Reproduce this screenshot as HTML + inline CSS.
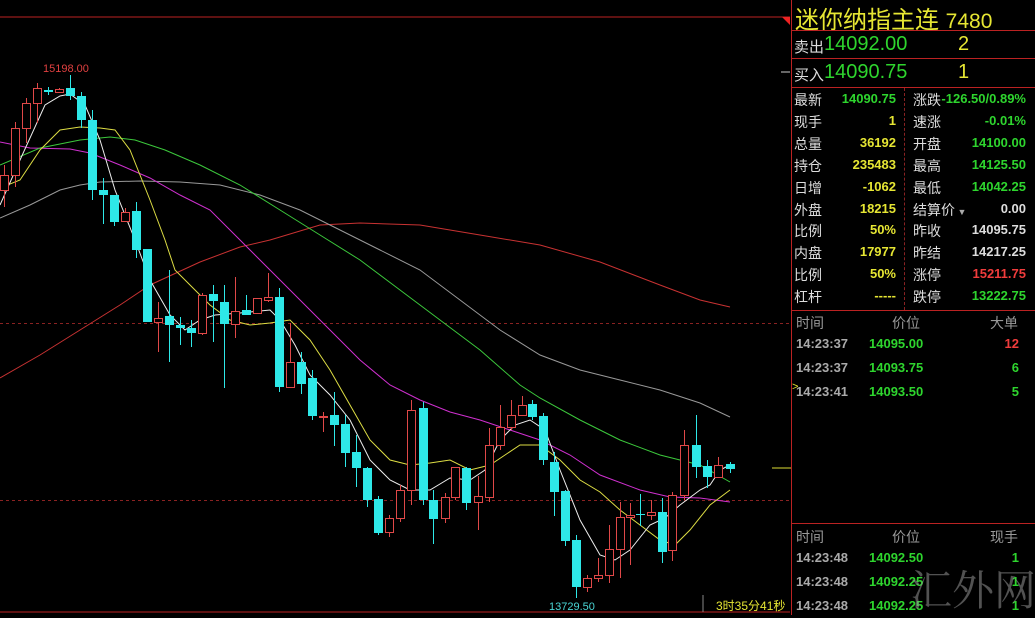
<!DOCTYPE html>
<html><head><meta charset="utf-8"><style>
html,body{margin:0;padding:0;background:#000;width:1035px;height:615px;overflow:hidden;font-family:"Liberation Sans","Noto Sans CJK SC",sans-serif}
#p{position:absolute;left:791px;top:0;width:244px;height:615px;border-left:1px solid #b22;}
.t{position:absolute;white-space:nowrap}
.g{color:#2ed52e;font-weight:bold}
.y{color:#e6e633;font-weight:bold}
.w{color:#ddd;font-weight:bold}
.r{color:#f03c3c;font-weight:bold}
.l{color:#ddd}
.hl{position:absolute;left:0;width:244px;height:1px;background:#b22}
</style></head><body>
<svg width="791" height="615" style="position:absolute;left:0;top:0" id="c">
<line x1="0" y1="17" x2="790" y2="17" stroke="#b22" stroke-width="1"/>
<polygon points="782,17 790,17 790,25" fill="#e22"/>
<line x1="0" y1="323.5" x2="790" y2="323.5" stroke="#8a2222" stroke-dasharray="3,3"/>
<line x1="0" y1="500.5" x2="790" y2="500.5" stroke="#8a2222" stroke-dasharray="3,3"/>
<line x1="0" y1="612" x2="790" y2="612" stroke="#b22"/>
<line x1="781" y1="72" x2="790" y2="72" stroke="#ccc"/>
<line x1="772" y1="468" x2="791" y2="468" stroke="#dd3"/>
<g id="ma" fill="none" stroke-width="1"></g>
<g id="k"></g>
<text x="43" y="72" fill="#e04040" font-size="11" font-family="Liberation Sans">15198.00</text>
<text x="549" y="610" fill="#4ad6d6" font-size="11" font-family="Liberation Sans">13729.50</text>
<line x1="703" y1="595" x2="703" y2="612" stroke="#888"/>
<text x="716" y="610" fill="#e6e633" font-size="12" font-family="Liberation Sans,Noto Sans CJK SC,sans-serif">3时35分41秒</text>
</svg>
<div id="p">
<div class="t" style="left:3px;top:0px;font-size:24px;color:#e6e633">迷你纳指主连 <span style="font-size:21px">7480</span></div>
<div class="hl" style="top:30px"></div>
<div class="t l" style="left:2px;top:36px;font-size:15px">卖出</div>
<div class="t" style="left:32px;top:33px;font-size:20px;color:#2ed52e">14092.00</div>
<div class="t" style="left:166px;top:33px;font-size:20px;color:#e6e633">2</div>
<div class="hl" style="top:58px"></div>
<div class="t l" style="left:2px;top:64px;font-size:15px">买入</div>
<div class="t" style="left:32px;top:61px;font-size:20px;color:#2ed52e">14090.75</div>
<div class="t" style="left:166px;top:61px;font-size:20px;color:#e6e633">1</div>
<div class="hl" style="top:87px"></div>
<div style="position:absolute;left:112px;top:88px;height:222px;border-left:1px dashed #8a2222"></div>
<div id="st"></div>
<div class="hl" style="top:310px"></div>
<div class="hl" style="top:523px"></div>
<div id="tk"></div>
<div class="t" style="left:118px;top:558px;font-size:42px;color:rgba(150,150,150,0.55);font-family:'Noto Serif CJK SC',serif">汇外网</div>
</div>
<script>
var L=[["最新","14090.75","g","涨跌","-126.50/0.89%","g"],["现手","1","y","速涨","-0.01%","g"],["总量","36192","y","开盘","14100.00","g"],["持仓","235483","y","最高","14125.50","g"],["日增","-1062","y","最低","14042.25","g"],["外盘","18215","y","结算价","0.00","w"],["比例","50%","y","昨收","14095.75","w"],["内盘","17977","y","昨结","14217.25","w"],["比例","50%","y","涨停","15211.75","r"],["杠杆","-----","y","跌停","13222.75","g"]];
var h="";L.forEach(function(r,i){var y=90+i*21.9;
h+='<div class="t l" style="left:2px;top:'+y+'px;font-size:14px">'+r[0]+'</div>';
h+='<div class="t '+r[2]+'" style="right:140px;top:'+(y+1)+'px;font-size:13px">'+r[1]+'</div>';
h+='<div class="t l" style="left:121px;top:'+y+'px;font-size:14px">'+r[3]+(i==5?'<span style="font-size:9px;color:#aaa"> ▼</span>':'')+'</div>';
h+='<div class="t '+r[5]+'" style="right:10px;top:'+(y+1)+'px;font-size:13px">'+r[4]+'</div>';});
document.getElementById("st").innerHTML=h;
function tk(top,hd,rows){var s='<div class="t" style="left:4px;top:'+top+'px;font-size:14px;color:#999">时间</div><div class="t" style="left:100px;top:'+top+'px;font-size:14px;color:#999">价位</div><div class="t" style="right:18px;top:'+top+'px;font-size:14px;color:#999">'+hd+'</div>';
rows.forEach(function(r,i){var y=top+23+i*24;s+='<div class="t" style="left:4px;top:'+y+'px;font-size:13px;color:#aaa;font-weight:bold">'+r[0]+'</div><div class="t g" style="left:77px;top:'+y+'px;font-size:13px">'+r[1]+'</div><div class="t '+r[3]+'" style="right:17px;top:'+y+'px;font-size:13px">'+r[2]+'</div>';});return s;}
document.getElementById("tk").innerHTML=tk(313,"大单",[["14:23:37","14095.00","12","r"],["14:23:37","14093.75","6","g"],["14:23:41","14093.50","5","g"]])+tk(527,"现手",[["14:23:48","14092.50","1","g"],["14:23:48","14092.25","1","g"],["14:23:48","14092.25","1","g"]])+'<div class="t" style="left:0px;top:381px;font-size:11px;color:#e6e633">&gt;</div>';
var K=[[4,'r',175,190,165,207],[15,'r',128,175,122,187],[26,'r',103,128,98,143],[37,'r',88,103,83,123],[48,'c',90,92,87,95],[59,'r',89,92,88,93],[70,'c',88,96,75,100],[81,'c',96,120,92,128],[92,'c',120,190,110,200],[103,'c',190,195,178,224],[114,'c',195,222,195,226],[125,'r',212,221,208,222],[136,'c',211,250,202,258],[147,'c',249,322,249,322],[158,'r',318,322,302,352],[169,'c',316,325,270,362],[180,'c',325,328,317,345],[191,'c',328,333,320,347],[202,'r',295,333,293,335],[213,'c',294,301,285,342],[224,'c',302,324,285,388],[235,'r',311,324,277,338],[246,'c',310,315,295,315],[257,'r',298,313,298,313],[268,'r',297,300,273,302],[279,'c',297,387,288,392],[290,'r',362,387,323,388],[301,'c',362,384,352,394],[312,'c',378,416,370,420],[323,'r',416,417,412,432],[334,'c',415,425,392,446],[345,'c',424,453,415,467],[356,'c',452,468,435,487],[367,'c',468,500,467,507],[378,'c',499,533,496,535],[389,'r',518,532,515,537],[400,'r',490,518,485,522],[411,'r',410,490,400,505],[423,'c',408,500,402,505],[433,'c',500,519,490,544],[445,'r',497,518,493,523],[455,'r',467,497,467,500],[466,'c',468,503,467,510],[478,'r',496,502,476,530],[489,'r',445,497,428,502],[500,'r',427,445,405,450],[511,'r',415,427,400,430],[522,'r',405,415,396,416],[532,'c',404,417,400,420],[543,'c',416,460,413,465],[554,'c',462,492,452,516],[565,'c',491,541,490,546],[576,'c',540,587,535,598],[587,'r',578,587,575,592],[598,'r',575,578,558,582],[609,'r',549,575,525,583],[620,'r',517,549,502,578],[630,'r',515,517,503,565],[640,'c',514,515,494,526],[651,'r',512,515,500,520],[662,'c',512,552,498,563],[672,'r',495,550,492,561],[684,'r',445,495,430,500],[696,'c',445,467,415,478],[707,'c',466,477,460,488],[718,'r',465,477,457,478],[730,'c',464,469,462,473]];
var s="";K.forEach(function(k){var x=k[0],col=k[1]=='r'?'#e04848':'#2ee8e8';
s+='<line x1="'+(x+.5)+'" y1="'+k[4]+'" x2="'+(x+.5)+'" y2="'+k[5]+'" stroke="'+col+'"/>';
var h=Math.max(k[3]-k[2],1);
if(k[1]=='r')s+='<rect x="'+(x-3.5)+'" y="'+(k[2]+.5)+'" width="8" height="'+h+'" fill="#000" stroke="'+col+'"/>';
else s+='<rect x="'+(x-4)+'" y="'+k[2]+'" width="9" height="'+h+'" fill="'+col+'"/>';});
document.getElementById("k").innerHTML=s;
var M={"#c83232":[[0,378],[40,355],[80,330],[120,305],[150,285],[200,262],[240,247],[270,240],[320,225],[360,223],[420,225],[480,235],[540,245],[600,262],[660,285],[700,300],[730,307]],
"#999":[[0,218],[30,205],[60,190],[80,185],[100,182],[140,181],[180,182],[220,185],[260,195],[300,210],[340,230],[380,250],[420,270],[460,300],[500,330],[540,355],[580,370],[620,380],[660,390],[700,403],[730,417]],
"#d030d0":[[0,142],[30,148],[70,149],[90,153],[120,165],[150,178],[180,195],[210,210],[240,240],[270,270],[300,300],[330,330],[360,360],[390,385],[420,400],[450,412],[480,420],[510,430],[540,440],[570,455],[600,475],[640,490],[670,497],[700,498],[730,502]],
"#3cc83c":[[0,165],[40,148],[80,140],[110,137],[135,140],[165,150],[200,165],[240,185],[280,210],[320,235],[360,260],[400,290],[440,320],[480,350],[520,385],[540,398],[580,420],[620,440],[660,455],[700,465],[730,482]],
"#dddd44":[[0,188],[20,180],[40,150],[60,130],[80,127],[100,128],[115,130],[130,150],[150,200],[165,240],[175,270],[195,290],[210,305],[230,320],[250,325],[270,323],[290,320],[310,340],[330,370],[350,405],[370,440],[390,460],[410,465],[430,463],[450,460],[470,470],[490,465],[505,455],[520,445],[540,445],[560,460],[580,480],[600,492],[620,510],[640,525],[660,540],[675,545],[690,530],[710,505],[730,490]],
"#eee":[[0,205],[20,160],[45,105],[60,96],[70,94],[85,105],[100,140],[115,190],[135,240],[150,280],[170,315],[185,330],[200,320],[215,315],[240,313],[270,310],[280,320],[295,345],[310,375],[330,395],[350,420],[370,460],[390,480],[410,490],[430,490],[450,478],[470,480],[485,470],[500,440],[515,425],[530,420],[545,430],[560,470],[580,520],[600,555],[615,560],[630,550],[650,525],[665,518],[680,505],[700,490],[710,485],[720,470],[730,465]]};
var m="";for(var c in M)m+='<polyline stroke="'+c+'" points="'+M[c].map(function(p){return p.join(",")}).join(" ")+'"/>';
document.getElementById("ma").innerHTML=m;
</script>
</body></html>
